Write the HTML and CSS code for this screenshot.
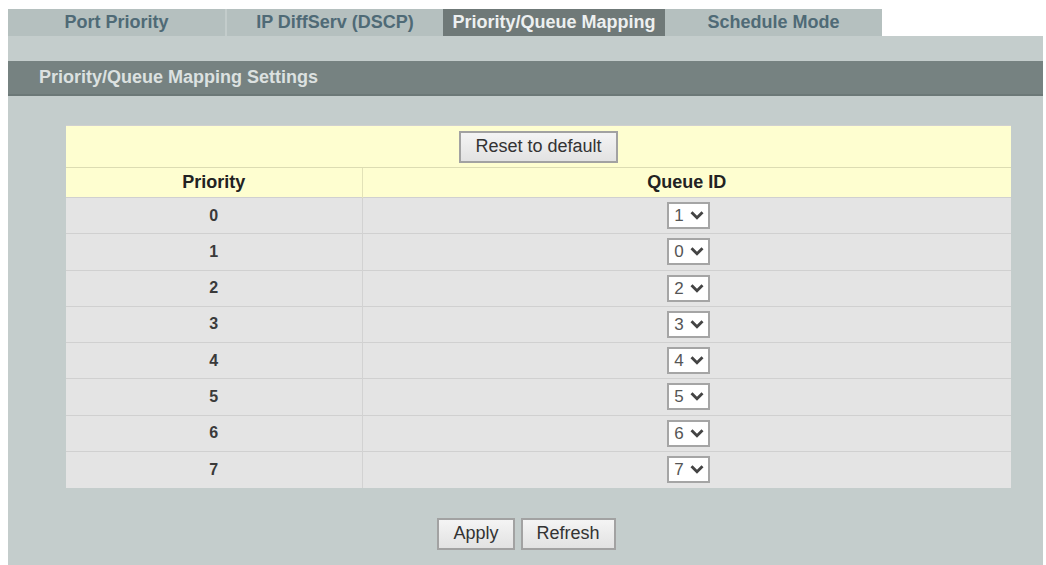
FILE: index.html
```html
<!DOCTYPE html>
<html>

<head>
    <meta name="viewport" content="width=device-width, initial-scale=1">
    <link rel="stylesheet" href="styles.css">
</head>

<body>
    <div class="tabs">
        <a class="tab tab-port">Port Priority</a>
        <a class="tab tab-dscp">IP DiffServ (DSCP)</a>
        <a class="tab tab-map active">Priority/Queue Mapping</a>
        <a class="tab tab-sched">Schedule Mode</a>
    </div>

    <div class="panel">
        <div class="panel-title">Priority/Queue Mapping Settings</div>

        <table class="qmap">
            <tr class="tools">
                <td colspan="2"><button class="btn">Reset to default</button></td>
            </tr>
            <tr class="head">
                <th class="col-prio">Priority</th>
                <th>Queue ID</th>
            </tr>
            <!-- Priority rows -->
            <tr><td>0</td><td><span class="sel"><select><option>1</option></select><svg viewBox="0 0 14 10"><path d="M2 2 L7 7 L12 2"/></svg></span></td></tr>
            <tr><td>1</td><td><span class="sel"><select><option>0</option></select><svg viewBox="0 0 14 10"><path d="M2 2 L7 7 L12 2"/></svg></span></td></tr>
            <tr><td>2</td><td><span class="sel"><select><option>2</option></select><svg viewBox="0 0 14 10"><path d="M2 2 L7 7 L12 2"/></svg></span></td></tr>
            <tr><td>3</td><td><span class="sel"><select><option>3</option></select><svg viewBox="0 0 14 10"><path d="M2 2 L7 7 L12 2"/></svg></span></td></tr>
            <tr><td>4</td><td><span class="sel"><select><option>4</option></select><svg viewBox="0 0 14 10"><path d="M2 2 L7 7 L12 2"/></svg></span></td></tr>
            <tr><td>5</td><td><span class="sel"><select><option>5</option></select><svg viewBox="0 0 14 10"><path d="M2 2 L7 7 L12 2"/></svg></span></td></tr>
            <tr><td>6</td><td><span class="sel"><select><option>6</option></select><svg viewBox="0 0 14 10"><path d="M2 2 L7 7 L12 2"/></svg></span></td></tr>
            <tr><td>7</td><td><span class="sel"><select><option>7</option></select><svg viewBox="0 0 14 10"><path d="M2 2 L7 7 L12 2"/></svg></span></td></tr>
        </table>

        <div class="actions">
            <button class="btn">Apply</button>
            <button class="btn">Refresh</button>
        </div>
    </div>
</body>

</html>
```

FILE: styles.css
```css
* {
    box-sizing: border-box
}

body {
    font-family: "Liberation Sans", Arial, sans-serif;
    font-size: 18px;
    margin: 0;
    background-color: #fff;
}

/* Tab strip */
.tabs {
    display: flex;
    margin-left: 8px;
    padding-top: 9px;
}

.tab {
    height: 27px;
    line-height: 27px;
    text-align: center;
    font-weight: bold;
    color: #4f6a76;
    background-color: #b5c0bf;
}

.tab-port {
    width: 219px;
    border-right: 2px solid #c3cccb;
}

.tab-dscp {
    width: 216px;
}

.tab-map {
    width: 222px;
}

.tab-sched {
    width: 217px;
}

.tab.active {
    background-color: #6f7978;
    color: #edf0f0;
}

/* Grey panel */
.panel {
    margin-left: 8px;
    width: 1035px;
    min-height: 529px;
    background-color: #c4cdcc;
    padding-top: 25px;
}

.panel-title {
    height: 35px;
    line-height: 33px;
    padding-left: 31px;
    font-weight: bold;
    color: #dce1e0;
    background-color: #768281;
    border-bottom: 2px solid #6c7877;
}

/* Mapping table */
.qmap {
    border-collapse: collapse;
    border-spacing: 0;
    margin: 29px 0 0 58px;
    width: 945px;
}

.qmap td,
.qmap th {
    padding: 0;
    text-align: center;
}

.qmap .tools td {
    height: 42px;
    background-color: #fefed0;
    border-bottom: 1px solid #dcdcb2;
}

.qmap .head th {
    height: 30px;
    background-color: #fefed0;
    color: #222;
}

.qmap .col-prio {
    width: 296px;
    border-right: 1px solid #e2e2b8;
}

.qmap td {
    height: 36.25px;
    background-color: #e4e4e4;
    font-size: 16px;
    font-weight: bold;
    color: #3a3a3a;
    border-top: 1px solid #d0d0d0;
}

.qmap td:first-child {
    border-right: 1px solid #d2d2d2;
}

.qmap .tools td:first-child {
    border-right: none;
}

/* Selects */
.sel {
    position: relative;
    display: inline-block;
    vertical-align: middle;
    margin-left: 4px;
}

.sel select {
    appearance: none;
    -webkit-appearance: none;
    width: 43px;
    height: 27px;
    padding: 0 0 0 5px;
    font-family: inherit;
    font-size: 17px;
    color: #555;
    background-color: #fff;
    border: 2px solid #a5a5a5;
    border-radius: 0;
}

.sel svg {
    position: absolute;
    right: 5px;
    top: 8px;
    width: 16px;
    height: 11px;
    pointer-events: none;
    fill: none;
    stroke: #444;
    stroke-width: 2.6;
}

/* Buttons */
.btn {
    font-family: inherit;
    font-size: 18px;
    color: #333;
    height: 32px;
    padding: 0 14px;
    background: linear-gradient(#f4f4f4, #e2e2e2);
    border: 2px solid #a2a2a2;
    border-radius: 0;
}

.actions {
    display: flex;
    justify-content: center;
    gap: 6px;
    margin-top: 30px;
    padding-left: 2px;
}
```
